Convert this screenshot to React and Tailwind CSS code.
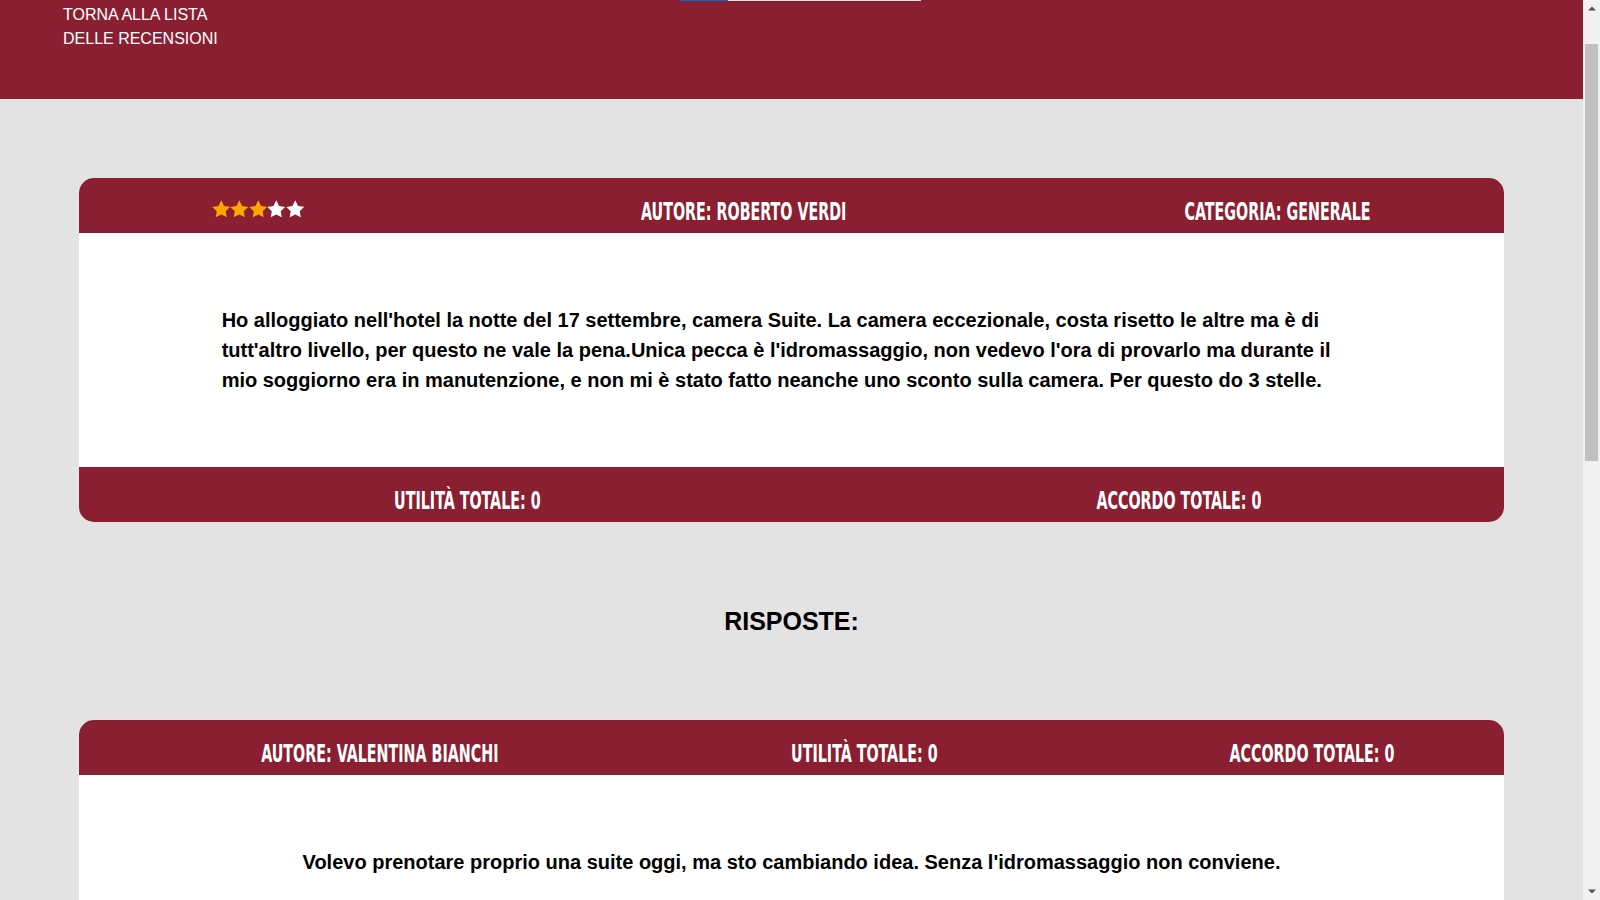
import React from "react";

const MAROON = "bg-[#8a1f31]";

function Star({ filled }) {
  return (
    <svg width="18.5" height="18" viewBox="0 0 24 23" className="block">
      <path
        d="M12 0.3l3.6 7.3 8 1.15-5.8 5.65 1.37 7.95L12 18.6l-7.17 3.75 1.37-7.95L0.4 8.75l8-1.15L12 0.3z"
        fill={filled ? "#ffa500" : "#ffffff"}
      />
    </svg>
  );
}

function Bebas({ children }) {
  return (
    <span className="inline-block scale-x-[0.635] origin-center whitespace-nowrap uppercase text-white font-bold text-[25px] leading-none [font-family:'DejaVu_Sans_Condensed','Liberation_Sans_Narrow','Liberation_Sans',sans-serif]">
      {children}
    </span>
  );
}

function Arrow({ up }) {
  return (
    <svg width="8" height="5" viewBox="0 0 8 5" className="block">
      <path d={up ? "M0 4.5L4 0.5L8 4.5Z" : "M0 0.5L4 4.5L8 0.5Z"} fill="#505050" />
    </svg>
  );
}

function Scrollbar() {
  return (
    <aside className="w-[17px] h-[900px] shrink-0 bg-[#f1f1f1] flex flex-col items-center">
      <div className="h-[17px] w-full flex items-center justify-center">
        <Arrow up />
      </div>
      <div className="h-[27px] shrink-0" />
      <div className="w-[13px] h-[417px] bg-[#c1c1c1] shrink-0" />
      <div className="flex-1" />
      <div className="h-[17px] w-full flex items-center justify-center">
        <Arrow />
      </div>
    </aside>
  );
}

export default function App() {
  return (
    <div className="flex items-start bg-[#e3e3e3] [font-family:'Liberation_Sans',Arial,sans-serif]">
      <div className="flex-1 min-w-0 min-h-[1812px]">
        <header className={`${MAROON} h-[99px] flex flex-col`}>
          <div className="flex h-px ml-[680px] w-[241px]">
            <div className="w-[48px] bg-[#0b6bd0]" />
            <div className="flex-1 bg-[#e6e6e6]" />
          </div>
          <div className="ml-[63px] mt-[1.5px] text-white text-[16px] leading-[24px] uppercase">
            <div>Torna alla lista</div>
            <div>delle recensioni</div>
          </div>
        </header>

        <main className="flex flex-col items-center">
          <section className="w-[90%] mt-[79px] rounded-[15px] bg-white overflow-hidden">
            <div className={`${MAROON} h-[55px] grid grid-cols-[358px_614px_452px] items-center pt-[15px]`}>
              <div className="flex justify-center -mt-[9px]">
                <Star filled />
                <Star filled />
                <Star filled />
                <Star />
                <Star />
              </div>
              <div className="text-center">
                <Bebas>Autore: Roberto Verdi</Bebas>
              </div>
              <div className="text-center">
                <Bebas>Categoria: Generale</Bebas>
              </div>
            </div>
            <div className="px-[10%] py-[72px]">
              <p className="text-black font-bold text-[20px] leading-[30px]">
                Ho alloggiato nell'hotel la notte del 17 settembre, camera Suite. La camera eccezionale, costa risetto le altre ma è di tutt'altro livello, per questo ne vale la pena.Unica pecca è l'idromassaggio, non vedevo l'ora di provarlo ma durante il mio soggiorno era in manutenzione, e non mi è stato fatto neanche uno sconto sulla camera. Per questo do 3 stelle.
              </p>
            </div>
            <div className={`${MAROON} h-[55px] grid grid-cols-[776px_648px] items-center pt-[15px]`}>
              <div className="text-center">
                <Bebas>Utilità totale: 0</Bebas>
              </div>
              <div className="text-center">
                <Bebas>Accordo totale: 0</Bebas>
              </div>
            </div>
          </section>

          <h2 className="mt-[84px] mb-[84px] text-black font-bold text-[25px] leading-[30px] text-center">
            RISPOSTE:
          </h2>

          <section className="w-[90%] rounded-[15px] bg-white overflow-hidden">
            <div className={`${MAROON} h-[55px] grid grid-cols-[100px_401px_568px_328px] items-center pt-[15px]`}>
              <div />
              <div className="text-center">
                <Bebas>Autore: Valentina Bianchi</Bebas>
              </div>
              <div className="text-center">
                <Bebas>Utilità totale: 0</Bebas>
              </div>
              <div className="text-center">
                <Bebas>Accordo totale: 0</Bebas>
              </div>
            </div>
            <div className="px-[10%] py-[72px]">
              <p className="text-black font-bold text-[20px] leading-[30px] text-center">
                Volevo prenotare proprio una suite oggi, ma sto cambiando idea. Senza l'idromassaggio non conviene.
              </p>
            </div>
            <div className={`${MAROON} h-[55px]`} />
          </section>
        </main>
      </div>
      <Scrollbar />
    </div>
  );
}
